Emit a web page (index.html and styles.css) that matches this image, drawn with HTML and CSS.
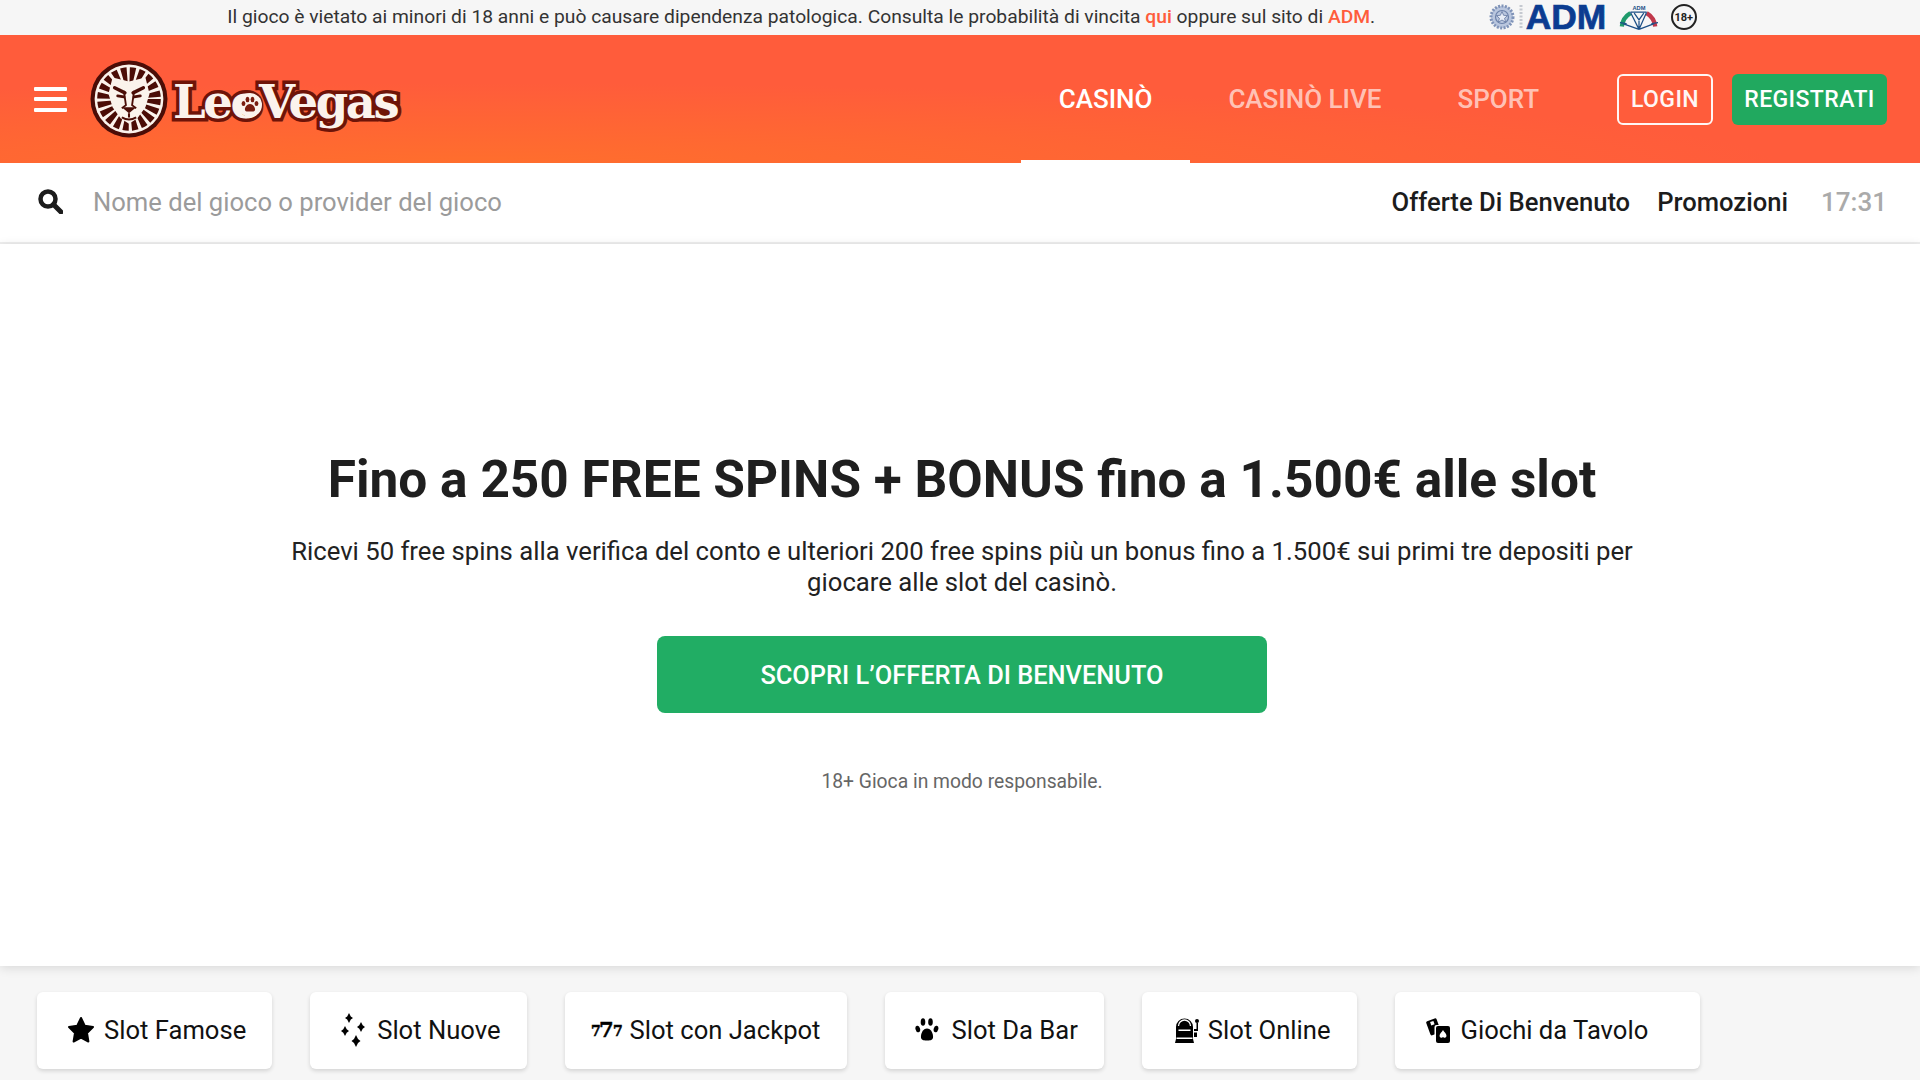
FILE: index.html
```html
<!DOCTYPE html>
<html lang="it">
<head>
<meta charset="utf-8">
<title>LeoVegas</title>
<link rel="stylesheet" href="styles.css">
</head>
<body>
<div class="page">
  <div class="topbar">
    <p class="notice">Il gioco è vietato ai minori di 18 anni e può causare dipendenza patologica. Consulta le probabilità di vincita <a class="notice-link">qui</a> oppure sul sito di <a class="notice-link">ADM</a>.</p>
    <div class="badges">
      <svg class="emblem" viewBox="0 0 36 30">
        <circle cx="13" cy="15" r="11" fill="#b9c6de" stroke="#7f93b8" stroke-width="3" stroke-dasharray="2 1.4"/>
        <circle cx="13" cy="15" r="6.5" fill="none" stroke="#6d82aa" stroke-width="1.2"/>
        <path d="M13 9.5l1.6 3.8 4 .3-3 2.6 1 4-3.6-2.2-3.6 2.2 1-4-3-2.6 4-.3z" fill="#e8edf6" stroke="#5f759f" stroke-width=".8"/>
        <path d="M32 3v24" stroke="#c5c9d0" stroke-width="3" stroke-dasharray="2 1.5"/>
      </svg>
      <span class="adm">ADM</span>
      <svg class="wheel" viewBox="0 0 42 28">
        <text x="21" y="6.5" text-anchor="middle" class="wheel-label">ADM</text>
        <path d="M3 24A18.500 18.500 0 0 1 12 10" fill="none" stroke="#1f9a6b" stroke-width="4.500"/>
        <path d="M29 10A18.500 18.500 0 0 1 38 24" fill="none" stroke="#c0384b" stroke-width="4.500"/>
        <path d="M12 9h17M21 27L12 9M21 27L29 9M21 27L4 21M21 27L37 21M16 10l5 7 5-7M1 20l7 1M34 21l7-1M21 17v10" fill="none" stroke="#1c4f86" stroke-width="1.300"/>
      </svg>
      <span class="age"><span class="age-text">18+</span></span>
    </div>
  </div>

  <header class="header">
    <button class="burger" aria-label="Menu"><span></span><span></span><span></span></button>
    <a class="logo">
      <svg class="lion" viewBox="0 0 76 76">
        <circle cx="38" cy="38" r="37.500" fill="#4b0d07"/>
        <circle cx="38" cy="38" r="33.500" fill="#fbf3ec"/>
        <circle cx="38" cy="38" r="23.500" fill="none" stroke="#4b0d07" stroke-width="15" stroke-dasharray="4.800 2.580"/>
        <path d="M22 17l16 4 16-4 4 16-4 13-8 11-8 5-8-5-8-11-4-13z" fill="#fbf3ec"/>
        <path d="M24 27l10 5M52 27l-10 5" stroke="#4b0d07" stroke-width="3.400" stroke-linecap="round"/>
        <path d="M27 35l6 1M49 35l-6 1" stroke="#4b0d07" stroke-width="2.800" stroke-linecap="round"/>
        <path d="M33 30l2 14-4 3M43 30l-2 14 4 3" fill="none" stroke="#4b0d07" stroke-width="1.800"/>
        <path d="M31 46h14l-7 6z" fill="#4b0d07"/>
        <path d="M38 52v4M31 56q7 4 14 0" fill="none" stroke="#4b0d07" stroke-width="2"/>
      </svg>
      <span class="wordmark">LeoVegas
        <svg class="paw-o" viewBox="0 0 24 24">
          <circle cx="12" cy="12" r="12" fill="#fbf3ec"/>
          <path d="M12 11c3 0 5.500 3.500 5 6-.4 2-2.500 1.500-5 1.500s-4.600.5-5-1.500c-.5-2.500 2-6 5-6z" fill="#7a1d10"/>
          <ellipse cx="5.500" cy="10.500" rx="1.900" ry="2.500" fill="#7a1d10"/>
          <ellipse cx="9.500" cy="6.500" rx="1.900" ry="2.700" fill="#7a1d10"/>
          <ellipse cx="14.500" cy="6.500" rx="1.900" ry="2.700" fill="#7a1d10"/>
          <ellipse cx="18.500" cy="10.500" rx="1.900" ry="2.500" fill="#7a1d10"/>
        </svg>
      </span>
    </a>
    <nav class="tabs">
      <a class="tab tab-active">CASINÒ</a>
      <a class="tab">CASINÒ LIVE</a>
      <a class="tab">SPORT</a>
    </nav>
    <a class="btn btn-login">LOGIN</a>
    <a class="btn btn-register">REGISTRATI</a>
  </header>

  <div class="searchbar">
    <svg class="search-icon" viewBox="0 0 25 25">
      <circle cx="10" cy="10" r="7.500" fill="none" stroke="#1c1c1c" stroke-width="4.500"/>
      <path d="M15.500 15.500L23 23" stroke="#1c1c1c" stroke-width="5" stroke-linecap="round"/>
    </svg>
    <input class="search-input" placeholder="Nome del gioco o provider del gioco">
    <a class="search-link">Offerte Di Benvenuto</a>
    <a class="search-link">Promozioni</a>
    <span class="clock">17:31</span>
  </div>

  <main class="hero">
    <h1 class="hero-title">Fino a 250 FREE SPINS + BONUS fino a 1.500€ alle slot</h1>
    <p class="hero-text">Ricevi 50 free spins alla verifica del conto e ulteriori 200 free spins più un bonus fino a 1.500€ sui primi tre depositi per giocare alle slot del casinò.</p>
    <a class="hero-cta">SCOPRI L’OFFERTA DI BENVENUTO</a>
    <p class="hero-note">18+ Gioca in modo responsabile.</p>
  </main>

  <section class="cats">
    <a class="cat">
      <svg class="cat-icon icon-star" viewBox="0 0 28 28"><path d="M14 2l3.700 7.800 8.300 1.200-6 6 1.400 8.500L14 21.500 6.600 25.500 8 17l-6-6 8.300-1.200z" fill="#000" stroke="#000" stroke-width="2" stroke-linejoin="round"/></svg>
      Slot Famose
    </a>
    <a class="cat">
      <svg class="cat-icon icon-spark" viewBox="0 0 28 34">
        <path d="M9 0l1.800 3.500L13 5l-2.200 1.500L9 10 7.200 6.500 5 5l2.200-1.500z" fill="#000"/>
        <path d="M21 9l1.700 3.300L25 14l-2.300 1.700L21 19l-1.700-3.300L17 14l2.300-1.700z" fill="#000"/>
        <path d="M5 13l1.700 3.300L9 18l-2.300 1.700L5 23l-1.700-3.300L1 18l2.300-1.700z" fill="#000"/>
        <path d="M16 22l2 4 2.500 2-2.500 2-2 4-2-4-2.500-2 2.500-2z" fill="#000"/>
      </svg>
      Slot Nuove
    </a>
    <a class="cat">
      <svg class="cat-icon icon-sevens" viewBox="0 0 31 26">
        <text x="0" y="19" class="seven-small">7</text>
        <text x="8" y="20" class="seven-big">7</text>
        <text x="22" y="19" class="seven-small">7</text>
      </svg>
      Slot con Jackpot
    </a>
    <a class="cat">
      <svg class="cat-icon icon-paw" viewBox="0 0 24 26">
        <path d="M12 11.500c3.800 0 6.500 5 6 9-.4 3-3.500 3-6 3s-5.600 0-6-3c-.5-4 2.200-9 6-9z" fill="#000"/>
        <ellipse cx="2.800" cy="12" rx="2.300" ry="3.300" fill="#000" transform="rotate(-15 2.800 12)"/>
        <ellipse cx="8" cy="5" rx="2.300" ry="3.800" fill="#000"/>
        <ellipse cx="15.500" cy="5" rx="2.300" ry="3.800" fill="#000"/>
        <ellipse cx="21" cy="12" rx="2.300" ry="3.300" fill="#000" transform="rotate(15 21 12)"/>
      </svg>
      Slot Da Bar
    </a>
    <a class="cat">
      <svg class="cat-icon icon-slot" viewBox="0 0 25 26">
        <path d="M2 10a8.500 8.500 0 0 1 17 0v12l1 4H1l1-4z" fill="#000"/>
        <path d="M4.500 9a6 6 0 0 1 12 0" fill="none" stroke="#fff" stroke-width="1.300"/>
        <rect x="4.500" y="12.500" width="12" height="1.500" fill="#fff"/>
        <rect x="2.500" y="20.500" width="16" height="1.500" fill="#fff"/>
        <circle cx="23" cy="4" r="2" fill="#000"/>
        <path d="M20 12h2.500V6h1.500v8H20zM20 15.500h3v4.500h-3z" fill="#000"/>
      </svg>
      Slot Online
    </a>
    <a class="cat cat-wide">
      <svg class="cat-icon icon-cards" viewBox="0 0 27 26">
        <rect x="3" y="2.500" width="11" height="15" rx="1.500" fill="#000" transform="rotate(-20 8 10)"/>
        <rect x="5.500" y="4.500" width="3.500" height="3.500" fill="#fff" transform="rotate(-20 7 6)"/>
        <rect x="9.500" y="8" width="15" height="18" rx="2" fill="#fff"/>
        <rect x="11" y="9" width="14" height="17" rx="2" fill="#000"/>
        <path d="M18 13c1 2 3.500 3.500 3.500 6a2 2 0 0 1-3.500 1 2 2 0 0 1-3.500-1c0-2.500 2.500-4 3.500-6z" fill="#fff"/>
      </svg>
      Giochi da Tavolo
    </a>
  </section>
</div>
</body>
</html>
```

FILE: styles.css
```css
* { box-sizing: border-box; }
html, body { margin: 0; height: 100%; }
body { font-family: Roboto, "Liberation Sans", sans-serif; color: #1c1c1c; background: #fff; overflow: hidden; }
a { color: inherit; text-decoration: none; }
p, h1 { margin: 0; }

.page { display: flex; flex-direction: column; height: 100vh; }

/* Top notice */
.topbar { flex: 0 0 35px; display: flex; align-items: center; justify-content: center; padding: 0 0 1px 4px; background: #f6f6f6; }
.notice { font-size: 19.25px; padding-bottom: 1px; color: #333; white-space: nowrap; }
.notice-link { color: #ff5c3b; font-weight: 500; }
.badges { display: flex; align-items: center; margin-left: 113.5px; }
.emblem { width: 36px; height: 30px; }
.adm { margin-left: 1px; font: 700 35.4px/34px "Liberation Sans", sans-serif; color: #0b3c91; -webkit-text-stroke: .7px #0b3c91; }
.wheel { width: 40px; height: 28px; margin-left: 12.5px; }
.wheel-label { font: 700 6px "Liberation Sans", sans-serif; fill: #1c4f86; }
.age { display: flex; align-items: center; justify-content: center; width: 26px; height: 26px; margin-left: 12px; border: 2px solid #222; border-radius: 50%; }
.age-text { font-size: 11px; font-weight: 700; color: #222; }

/* Header */
.header { flex: 0 0 128px; display: flex; align-items: center; padding: 0 33px 0 34px; background: radial-gradient(ellipse 1300px 80px at 25% 100%, #ff6e2d, rgba(255, 110, 45, 0)), #ff5c3b; }
.burger { display: flex; flex-direction: column; justify-content: space-between; width: 33px; height: 25px; padding: 0; border: 0; background: none; }
.burger span { display: block; height: 4px; background: #fff; border-radius: 1px; }
.logo { display: flex; align-items: center; margin-left: 23px; }
.lion { width: 78px; height: 78px; }
.wordmark { position: relative; margin: 5px 0 0 5px; font: 700 46.5px/60px "DejaVu Serif", serif; letter-spacing: -2.4px; color: #fbf3ec; -webkit-text-stroke: 7px #6e1408; paint-order: stroke fill; white-space: nowrap; }
.paw-o { position: absolute; left: 65px; top: 21px; width: 24px; height: 24px; }
.tabs { display: flex; align-self: stretch; margin-left: auto; }
.tab { display: flex; align-items: center; padding: 0 38px; font-size: 26px; font-weight: 500; color: rgba(255, 255, 255, .65); border-bottom: 3px solid transparent; border-top: 3px solid transparent; }
.tab-active { color: #fff; border-bottom-color: #fff; }
.btn { display: flex; align-items: center; justify-content: center; height: 51px; border-radius: 6px; font-size: 23px; font-weight: 500; letter-spacing: .4px; color: #fff; }
.btn-login { width: 96px; margin-left: 40px; border: 2px solid #fff; opacity: .95; }
.btn-register { width: 155px; margin-left: 19px; background: #21a95f; }

/* Search */
.searchbar { flex: 0 0 81px; display: flex; align-items: center; padding: 0 33px 2px 38px; background: #fff; border-bottom: 2px solid #eee; }
.search-icon { width: 25px; height: 25px; }
.search-input { flex: 1; min-width: 0; margin-left: 30px; padding: 0; border: 0; outline: 0; font: 400 25.6px Roboto, sans-serif; color: #1c1c1c; }
.search-input::placeholder { color: #9b9b9b; opacity: 1; }
.search-link { font-size: 25.6px; font-weight: 500; margin-left: 27px; color: #1c1c1c; }
.clock { margin-left: 33px; font-size: 26px; font-weight: 500; color: #aaa; }

/* Hero */
.hero { flex: 1; position: relative; z-index: 1; display: flex; flex-direction: column; align-items: center; padding: 206px 0 0 4px; background: #fff; box-shadow: 0 2px 10px rgba(0, 0, 0, .12); text-align: center; }
.hero-title { font-size: 51.4px; line-height: 60px; font-weight: 700; color: #1f1f1f; }
.hero-text { max-width: 1360px; margin-top: 26px; font-size: 25.7px; line-height: 31px; color: #222; }
.hero-cta { display: flex; align-items: center; justify-content: center; width: 610px; height: 77px; margin-top: 38px; border-radius: 8px; background: #21ad64; color: #fff; font-size: 25.4px; font-weight: 500; }
.hero-note { margin-top: 57px; font-size: 19.3px; line-height: 24px; color: #666; }

/* Category chips */
.cats { flex: 0 0 114px; display: flex; align-items: flex-start; gap: 38px; padding: 26px 0 0 37px; background: #f6f6f6; }
.cat { display: flex; align-items: center; gap: 9px; height: 77px; padding: 0 26px 2px 30px; background: #fff; border-radius: 6px; box-shadow: 0 2px 4px rgba(0, 0, 0, .14); font-size: 25.6px; color: #111; white-space: nowrap; }
.cat-wide { padding-right: 52px; }
.cat-icon { flex: none; }
.icon-star { width: 28px; height: 28px; }
.icon-spark { width: 28px; height: 34px; }
.icon-sevens { width: 31px; height: 26px; margin-left: -4px; margin-right: -1px; overflow: visible; }
.icon-paw { width: 24px; height: 26px; margin-right: 4px; }
.icon-slot { width: 25px; height: 26px; margin-left: 2px; }
.icon-cards { width: 27px; height: 26px; }
.seven-small { font: 700 14px "DejaVu Serif", serif; fill: #000; stroke: #000; stroke-width: .5px; }
.seven-big { font: 700 21px "DejaVu Serif", serif; fill: #000; stroke: #000; stroke-width: .5px; }
```
